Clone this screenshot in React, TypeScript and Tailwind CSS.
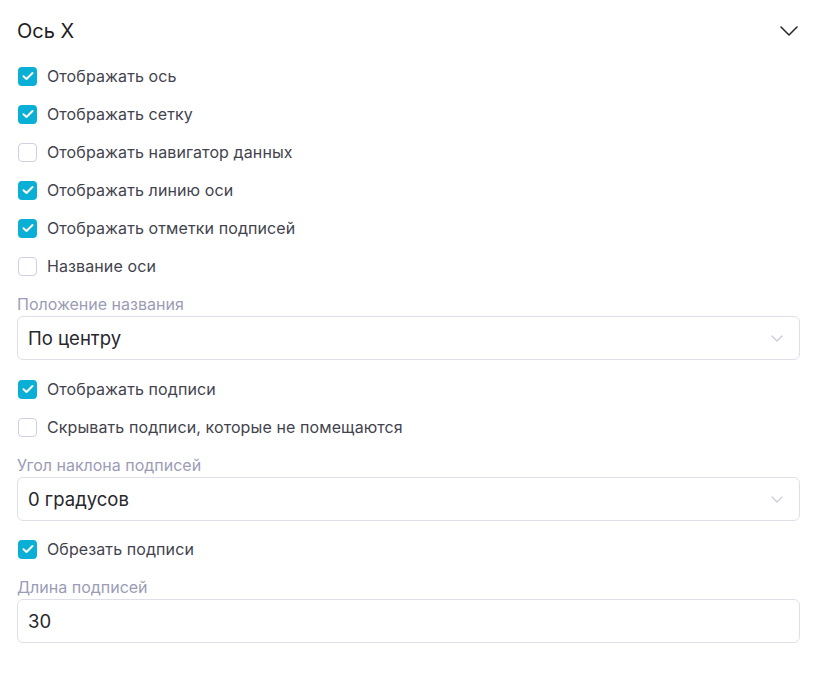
import { useState } from "react";

const font = { fontFamily: "Inter, 'Noto Sans', sans-serif" };

type CheckRowProps = {
  label: string;
  checked: boolean;
  onToggle: () => void;
};

const CheckRow = ({ label, checked, onToggle }: CheckRowProps) => (
  <label className="flex h-[38px] items-center gap-[10px] cursor-pointer select-none" onClick={onToggle}>
    {checked ? (
      <span className="flex h-[19px] w-[19px] items-center justify-center rounded-[4px] bg-[#0aafd5] ml-[1px]">
        <svg width="12" height="10" viewBox="0 0 12 10" fill="none">
          <path d="M1.5 5.2 4.5 8 10.5 2" stroke="white" strokeWidth="2" strokeLinecap="round" strokeLinejoin="round" />
        </svg>
      </span>
    ) : (
      <span className="h-[19px] w-[19px] rounded-[4px] border border-[#cfd0e2] bg-white ml-[1px]" />
    )}
    <span className="text-[16px] tracking-[0.1px] text-[#43434e]">{label}</span>
  </label>
);

const FieldLabel = ({ children }: { children: string }) => (
  <div className="mt-[9px] mb-[2px] h-[20px] text-[16px] leading-[20px] text-[#9b9cb6]">{children}</div>
);

const SelectBox = ({ value }: { value: string }) => (
  <div className="flex h-[44px] items-center justify-between rounded-[6px] border border-[#dfdfea] bg-white pl-[10px] pr-[16px]">
    <span className="pt-[1px] text-[18.5px] text-[#27272c]">{value}</span>
    <svg width="12" height="7" viewBox="0 0 12 7" fill="none">
      <path d="M1 1l5 5 5-5" stroke="#c9cad9" strokeWidth="1.2" strokeLinecap="round" strokeLinejoin="round" />
    </svg>
  </div>
);

export default function App() {
  const [checks, setChecks] = useState<Record<string, boolean>>({
    axis: true,
    grid: true,
    navigator: false,
    axisLine: true,
    ticks: true,
    axisName: false,
    labels: true,
    hideLabels: false,
    cut: true,
  });
  const toggle = (key: string) => setChecks((c) => ({ ...c, [key]: !c[key] }));

  return (
    <div className="min-h-[673px] w-[814px] bg-white pl-[17px] pr-[14px] pt-[18px]" style={font}>
      <div className="flex h-[26px] items-center justify-between">
        <span className="text-[20px] text-[#1e1e22]">Ось X</span>
        <svg width="18" height="10" viewBox="0 0 18 10" fill="none" className="mr-[2px]">
          <path d="M1 1l8 8 8-8" stroke="#2a2a30" strokeWidth="1.6" strokeLinecap="round" strokeLinejoin="round" />
        </svg>
      </div>

      <div className="mt-[13px]">
        <CheckRow label="Отображать ось" checked={checks.axis} onToggle={() => toggle("axis")} />
        <CheckRow label="Отображать сетку" checked={checks.grid} onToggle={() => toggle("grid")} />
        <CheckRow label="Отображать навигатор данных" checked={checks.navigator} onToggle={() => toggle("navigator")} />
        <CheckRow label="Отображать линию оси" checked={checks.axisLine} onToggle={() => toggle("axisLine")} />
        <CheckRow label="Отображать отметки подписей" checked={checks.ticks} onToggle={() => toggle("ticks")} />
        <CheckRow label="Название оси" checked={checks.axisName} onToggle={() => toggle("axisName")} />
      </div>

      <FieldLabel>Положение названия</FieldLabel>
      <SelectBox value="По центру" />

      <div className="mt-[10px]">
        <CheckRow label="Отображать подписи" checked={checks.labels} onToggle={() => toggle("labels")} />
        <CheckRow label="Скрывать подписи, которые не помещаются" checked={checks.hideLabels} onToggle={() => toggle("hideLabels")} />
      </div>

      <FieldLabel>Угол наклона подписей</FieldLabel>
      <SelectBox value="0 градусов" />

      <div className="mt-[9px]">
        <CheckRow label="Обрезать подписи" checked={checks.cut} onToggle={() => toggle("cut")} />
      </div>

      <FieldLabel>Длина подписей</FieldLabel>
      <div className="flex h-[44px] items-center rounded-[6px] border border-[#dfdfea] bg-white pl-[10px]">
        <span className="pt-[1px] text-[18.5px] text-[#27272c]">30</span>
      </div>
    </div>
  );
}
